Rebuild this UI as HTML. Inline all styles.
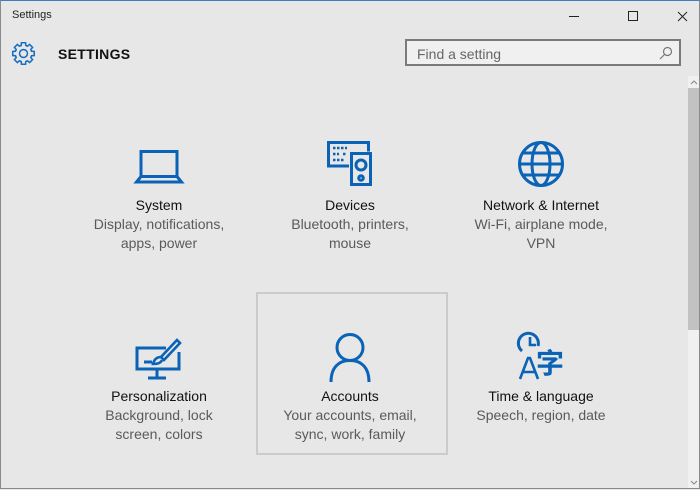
<!DOCTYPE html>
<html><head><style>
body{margin:0;width:700px;height:490px;overflow:hidden;background:#e6e7e6;font-family:"Liberation Sans",sans-serif;position:relative}
.win{position:absolute;left:0;top:0;width:698px;height:487px;border:1px solid #8a8a8a;border-top:1px solid #3c7fc1}
.t{position:absolute;font-size:11px;color:#222;left:12px;top:9px}
.hdr{position:absolute;left:58px;top:46px;font-size:14px;font-weight:bold;color:#111;letter-spacing:.3px}
.search{position:absolute;left:405px;top:39px;width:276px;height:27px;border:2px solid #7a7a7a;background:#f0f0f0;box-sizing:border-box}
.search span{position:absolute;left:10px;top:5px;font-size:14px;color:#666}
.sb{position:absolute;left:688px;top:76px;width:11px;height:412px;background:#f0f0f0}
.th{position:absolute;left:688px;top:88px;width:11px;height:242px;background:#c2c2c2}
.it{position:absolute;width:190px;text-align:center;font-size:14px;line-height:19px;color:#5a5a5a}
.it b{display:block;font-weight:normal;color:#111}
.sel{position:absolute;left:256px;top:292px;width:188px;height:159px;border:2px solid #cbcbcb}
svg.ic{position:absolute;left:0;top:0;fill:none;stroke:#0a63b6;stroke-width:3}
</style></head><body>
<div class="win"></div>
<div class="t">Settings</div>
<svg style="position:absolute;left:560px;top:10px" width="130" height="14" fill="none" stroke="#222" stroke-width="1"><line x1="9" y1="6.5" x2="19" y2="6.5"/><rect x="68.5" y="1.5" width="9" height="9"/><path d="M118 2l9 9M127 2l-9 9"/></svg>
<svg style="position:absolute;left:11px;top:41px" width="25" height="25" viewBox="0 0 24 24" fill="none" stroke="#1a6fc1" stroke-width="1.5"><g transform="translate(12 12)"><polygon points="7.69,-2.2 10.31,-2 10.31,2 7.69,2.2 6.99,3.88 8.7,5.88 5.88,8.7 3.88,6.99 2.2,7.69 2,10.31 -2,10.31 -2.2,7.69 -3.88,6.99 -5.88,8.7 -8.7,5.88 -6.99,3.88 -7.69,2.2 -10.31,2 -10.31,-2 -7.69,-2.2 -6.99,-3.88 -8.7,-5.88 -5.88,-8.7 -3.88,-6.99 -2.2,-7.69 -2,-10.31 2,-10.31 2.2,-7.69 3.88,-6.99 5.88,-8.7 8.7,-5.88 6.99,-3.88"/><circle r="3.8"/></g></svg>
<div class="hdr">SETTINGS</div>
<div class="search"><span>Find a setting</span><svg style="position:absolute;right:6px;top:5px" width="14" height="14" fill="none" stroke="#777" stroke-width="1.2"><circle cx="8.5" cy="5.5" r="4"/><path d="M5.5 8.5L1 13"/></svg></div>
<div class="sb"></div><div class="th"></div>
<svg style="position:absolute;left:689px;top:78px" width="10" height="8" fill="none" stroke="#888"><path d="M2 6l3-3 3 3"/></svg>
<svg style="position:absolute;left:689px;top:479px" width="10" height="8" fill="none" stroke="#888"><path d="M2 2l3 3 3-3"/></svg>
<div class="sel"></div>
<svg class="ic" width="700" height="490">
<rect x="141" y="151.5" width="36" height="25"/>
<path d="M141 176.5l-4.5 5.5h45l-4.5-5.5"/>
<path d="M349 166h-20.5v-23.5h40v9"/>
<path d="M333 148h14M333 154h6M343 154h4M333 160h12" stroke-width="2.5" stroke-dasharray="2.5 1.5"/>
<rect x="351.5" y="153.5" width="19" height="31"/>
<circle cx="361" cy="165" r="5"/>
<circle cx="361" cy="178" r="2.3"/>
<circle cx="541" cy="164" r="21.5"/>
<ellipse cx="541" cy="164" rx="9" ry="21.5"/>
<path d="M519.5 164h43M523 153h36M523 175h36"/>
<path d="M166 348h-29v21h42v-17"/>
<path d="M144 362h8M157 369v8M148 378h18"/>
<path d="M177 340l3 3-16 17-3-3z" stroke-width="2.6"/>
<path d="M161 357c-5 0-7 3-8 7 4 0 8-1 9-4" stroke-width="2.6"/>
<circle cx="350" cy="347.5" r="13"/>
<path d="M331 382c0-15 8-21.5 19-21.5s19 6.5 19 21.5"/>
<path d="M522 351a10 10 0 1 1 16 -5"/>
<path d="M530 337v8h6" stroke-width="2.6"/>
<path d="M520 379l8-21h2l8 21M523 372h12" stroke-width="2.6"/>
</svg>
<div style="position:absolute;left:536px;top:345px;font-size:28px;line-height:34px;color:#0a63b6;font-family:'Noto Sans CJK SC',sans-serif;font-weight:bold">字</div>
<div class="it" style="left:64px;top:196px"><b>System</b>Display, notifications,<br>apps, power</div>
<div class="it" style="left:255px;top:196px"><b>Devices</b>Bluetooth, printers,<br>mouse</div>
<div class="it" style="left:446px;top:196px"><b>Network &amp; Internet</b>Wi-Fi, airplane mode,<br>VPN</div>
<div class="it" style="left:64px;top:387px"><b>Personalization</b>Background, lock<br>screen, colors</div>
<div class="it" style="left:255px;top:387px"><b>Accounts</b>Your accounts, email,<br>sync, work, family</div>
<div class="it" style="left:446px;top:387px"><b>Time &amp; language</b>Speech, region, date</div>
</body></html>
